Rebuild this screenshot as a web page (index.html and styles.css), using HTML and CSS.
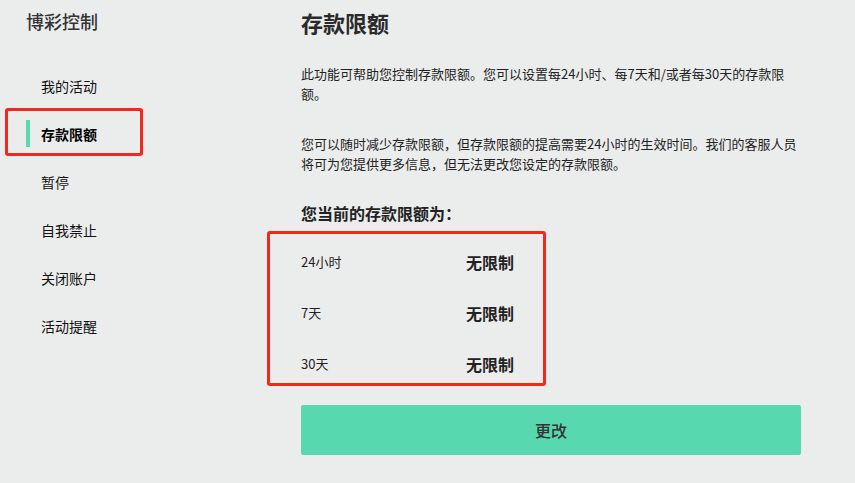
FILE: index.html
```html
<!DOCTYPE html>
<html lang="zh-CN">
<head>
<meta charset="utf-8">
<title>存款限额</title>
<link rel="stylesheet" href="styles.css">
</head>
<body>
<div class="page">
  <aside class="sidebar">
    <div class="side-title">博彩控制</div>
    <ul class="nav">
      <li class="nav-item">我的活动</li>
      <li class="nav-item active">存款限额</li>
      <li class="nav-item">暂停</li>
      <li class="nav-item">自我禁止</li>
      <li class="nav-item">关闭账户</li>
      <li class="nav-item">活动提醒</li>
    </ul>
  </aside>
  <main class="main">
    <h1 class="title">存款限额</h1>
    <p class="text">此功能可帮助您控制存款限额。您可以设置每24小时、每7天和/或者每30天的存款限额。</p>
    <p class="text">您可以随时减少存款限额，但存款限额的提高需要24小时的生效时间。我们的客服人员将可为您提供更多信息，但无法更改您设定的存款限额。</p>
    <h2 class="subtitle">您当前的存款限额为：</h2>
    <div class="limits">
      <div class="limit-row"><span class="limit-label">24小时</span><span class="limit-value">无限制</span></div>
      <div class="limit-row"><span class="limit-label">7天</span><span class="limit-value">无限制</span></div>
      <div class="limit-row"><span class="limit-label">30天</span><span class="limit-value">无限制</span></div>
    </div>
    <button class="btn" type="button">更改</button>
  </main>
</div>
</body>
</html>
```

FILE: styles.css
```css
html, body {
  margin: 0;
  padding: 0;
  background: #ebedec;
  font-family: "Noto Sans CJK SC", "Noto Sans", sans-serif;
  color: #222;
}

.page {
  display: flex;
  width: 855px;
  height: 483px;
  overflow: hidden;
}

.sidebar {
  width: 301px;
  flex: none;
}

.side-title {
  padding-left: 26px;
  padding-top: 9px;
  font-size: 18px;
  line-height: 24px;
  font-weight: 500;
  color: #333;
}

.nav {
  list-style: none;
  margin: 29px 0 0 0;
  padding: 0;
}

.nav-item {
  position: relative;
  display: flex;
  align-items: center;
  height: 48px;
  padding-left: 41px;
  font-size: 14px;
  color: #111;
}

.nav-item.active {
  font-weight: 700;
  color: #000;
}

.nav-item.active::before {
  content: "";
  position: absolute;
  left: 26px;
  top: 10px;
  width: 4px;
  height: 27px;
  background: #5ad8ae;
}

.nav-item.active::after {
  content: "";
  position: absolute;
  left: 5px;
  top: -2px;
  width: 132px;
  height: 42px;
  border: 3px solid #f5261b;
  border-radius: 3px;
}

.main {
  width: 500px;
  flex: none;
  padding-top: 7px;
}

.title {
  margin: 0;
  font-size: 22px;
  line-height: 30px;
  font-weight: 700;
  color: #2a2a2a;
}

.text {
  margin: 27px 0 0 0;
  font-size: 13px;
  line-height: 20px;
  color: #222;
}

.text + .text {
  margin-top: 30px;
}

.subtitle {
  margin: 29px 0 0 0;
  font-size: 16px;
  line-height: 20px;
  font-weight: 700;
  color: #222;
}

.limits {
  position: relative;
  margin-top: 13px;
}

.limits::after {
  content: "";
  position: absolute;
  left: -34px;
  top: -5px;
  width: 273px;
  height: 149px;
  border: 3px solid #f5261b;
  border-radius: 3px;
}

.limit-row {
  display: grid;
  grid-template-columns: 165px auto;
  align-items: center;
  height: 51px;
}

.limit-label {
  font-size: 13px;
  color: #222;
}

.limit-value {
  font-size: 16px;
  font-weight: 700;
  color: #222;
}

.btn {
  display: block;
  width: 500px;
  height: 50px;
  margin-top: 16px;
  border: none;
  border-radius: 2px;
  background: #58d8ae;
  color: #333;
  font-family: inherit;
  font-size: 16px;
  font-weight: 500;
  cursor: pointer;
}
```
